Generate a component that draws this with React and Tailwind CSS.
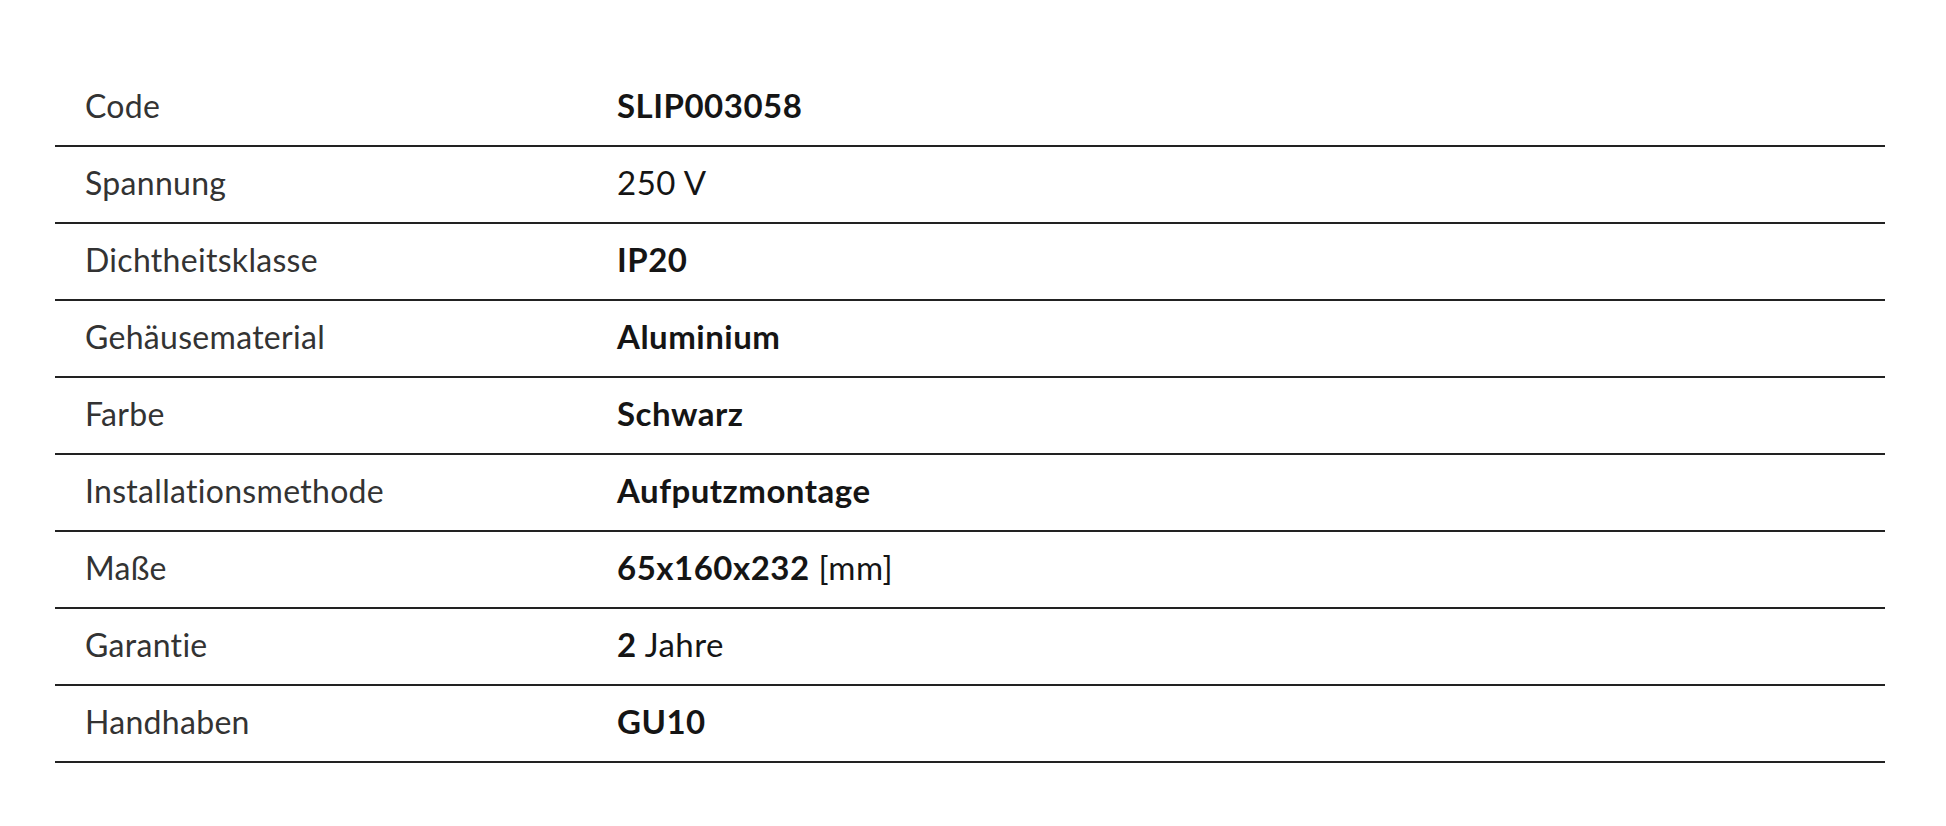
const specs = [
  { label: 'Code', value: <b className="font-bold">SLIP003058</b> },
  { label: 'Spannung', value: '250 V' },
  { label: 'Dichtheitsklasse', value: <b className="font-bold">IP20</b> },
  { label: 'Gehäusematerial', value: <b className="font-bold">Aluminium</b> },
  { label: 'Farbe', value: <b className="font-bold">Schwarz</b> },
  { label: 'Installationsmethode', value: <b className="font-bold">Aufputzmontage</b> },
  {
    label: 'Maße',
    value: (
      <>
        <b className="font-bold">65x160x232</b> [mm]
      </>
    ),
  },
  {
    label: 'Garantie',
    value: (
      <>
        <b className="font-bold">2</b> Jahre
      </>
    ),
  },
  { label: 'Handhaben', value: <b className="font-bold">GU10</b> },
]

export default function App() {
  return (
    <div
      className="min-h-[826px] w-full bg-white pt-[70px] pl-[55px] pr-[61px]"
      style={{ fontFamily: 'Lato, "Open Sans", sans-serif' }}
    >
      <div className="flex flex-col">
        {specs.map((row) => (
          <div
            key={row.label}
            className="flex h-[77px] items-center border-b-2 border-[#222222] pb-[4px] text-[#2b2b2b]"
          >
            <div className="w-[532px] shrink-0 pl-[30px] text-[32px] font-normal tracking-[0.3px] text-[#333333]">
              {row.label}
            </div>
            <div className="pl-[30px] text-[33px] tracking-[0.5px] text-[#151515]">{row.value}</div>
          </div>
        ))}
      </div>
    </div>
  )
}
